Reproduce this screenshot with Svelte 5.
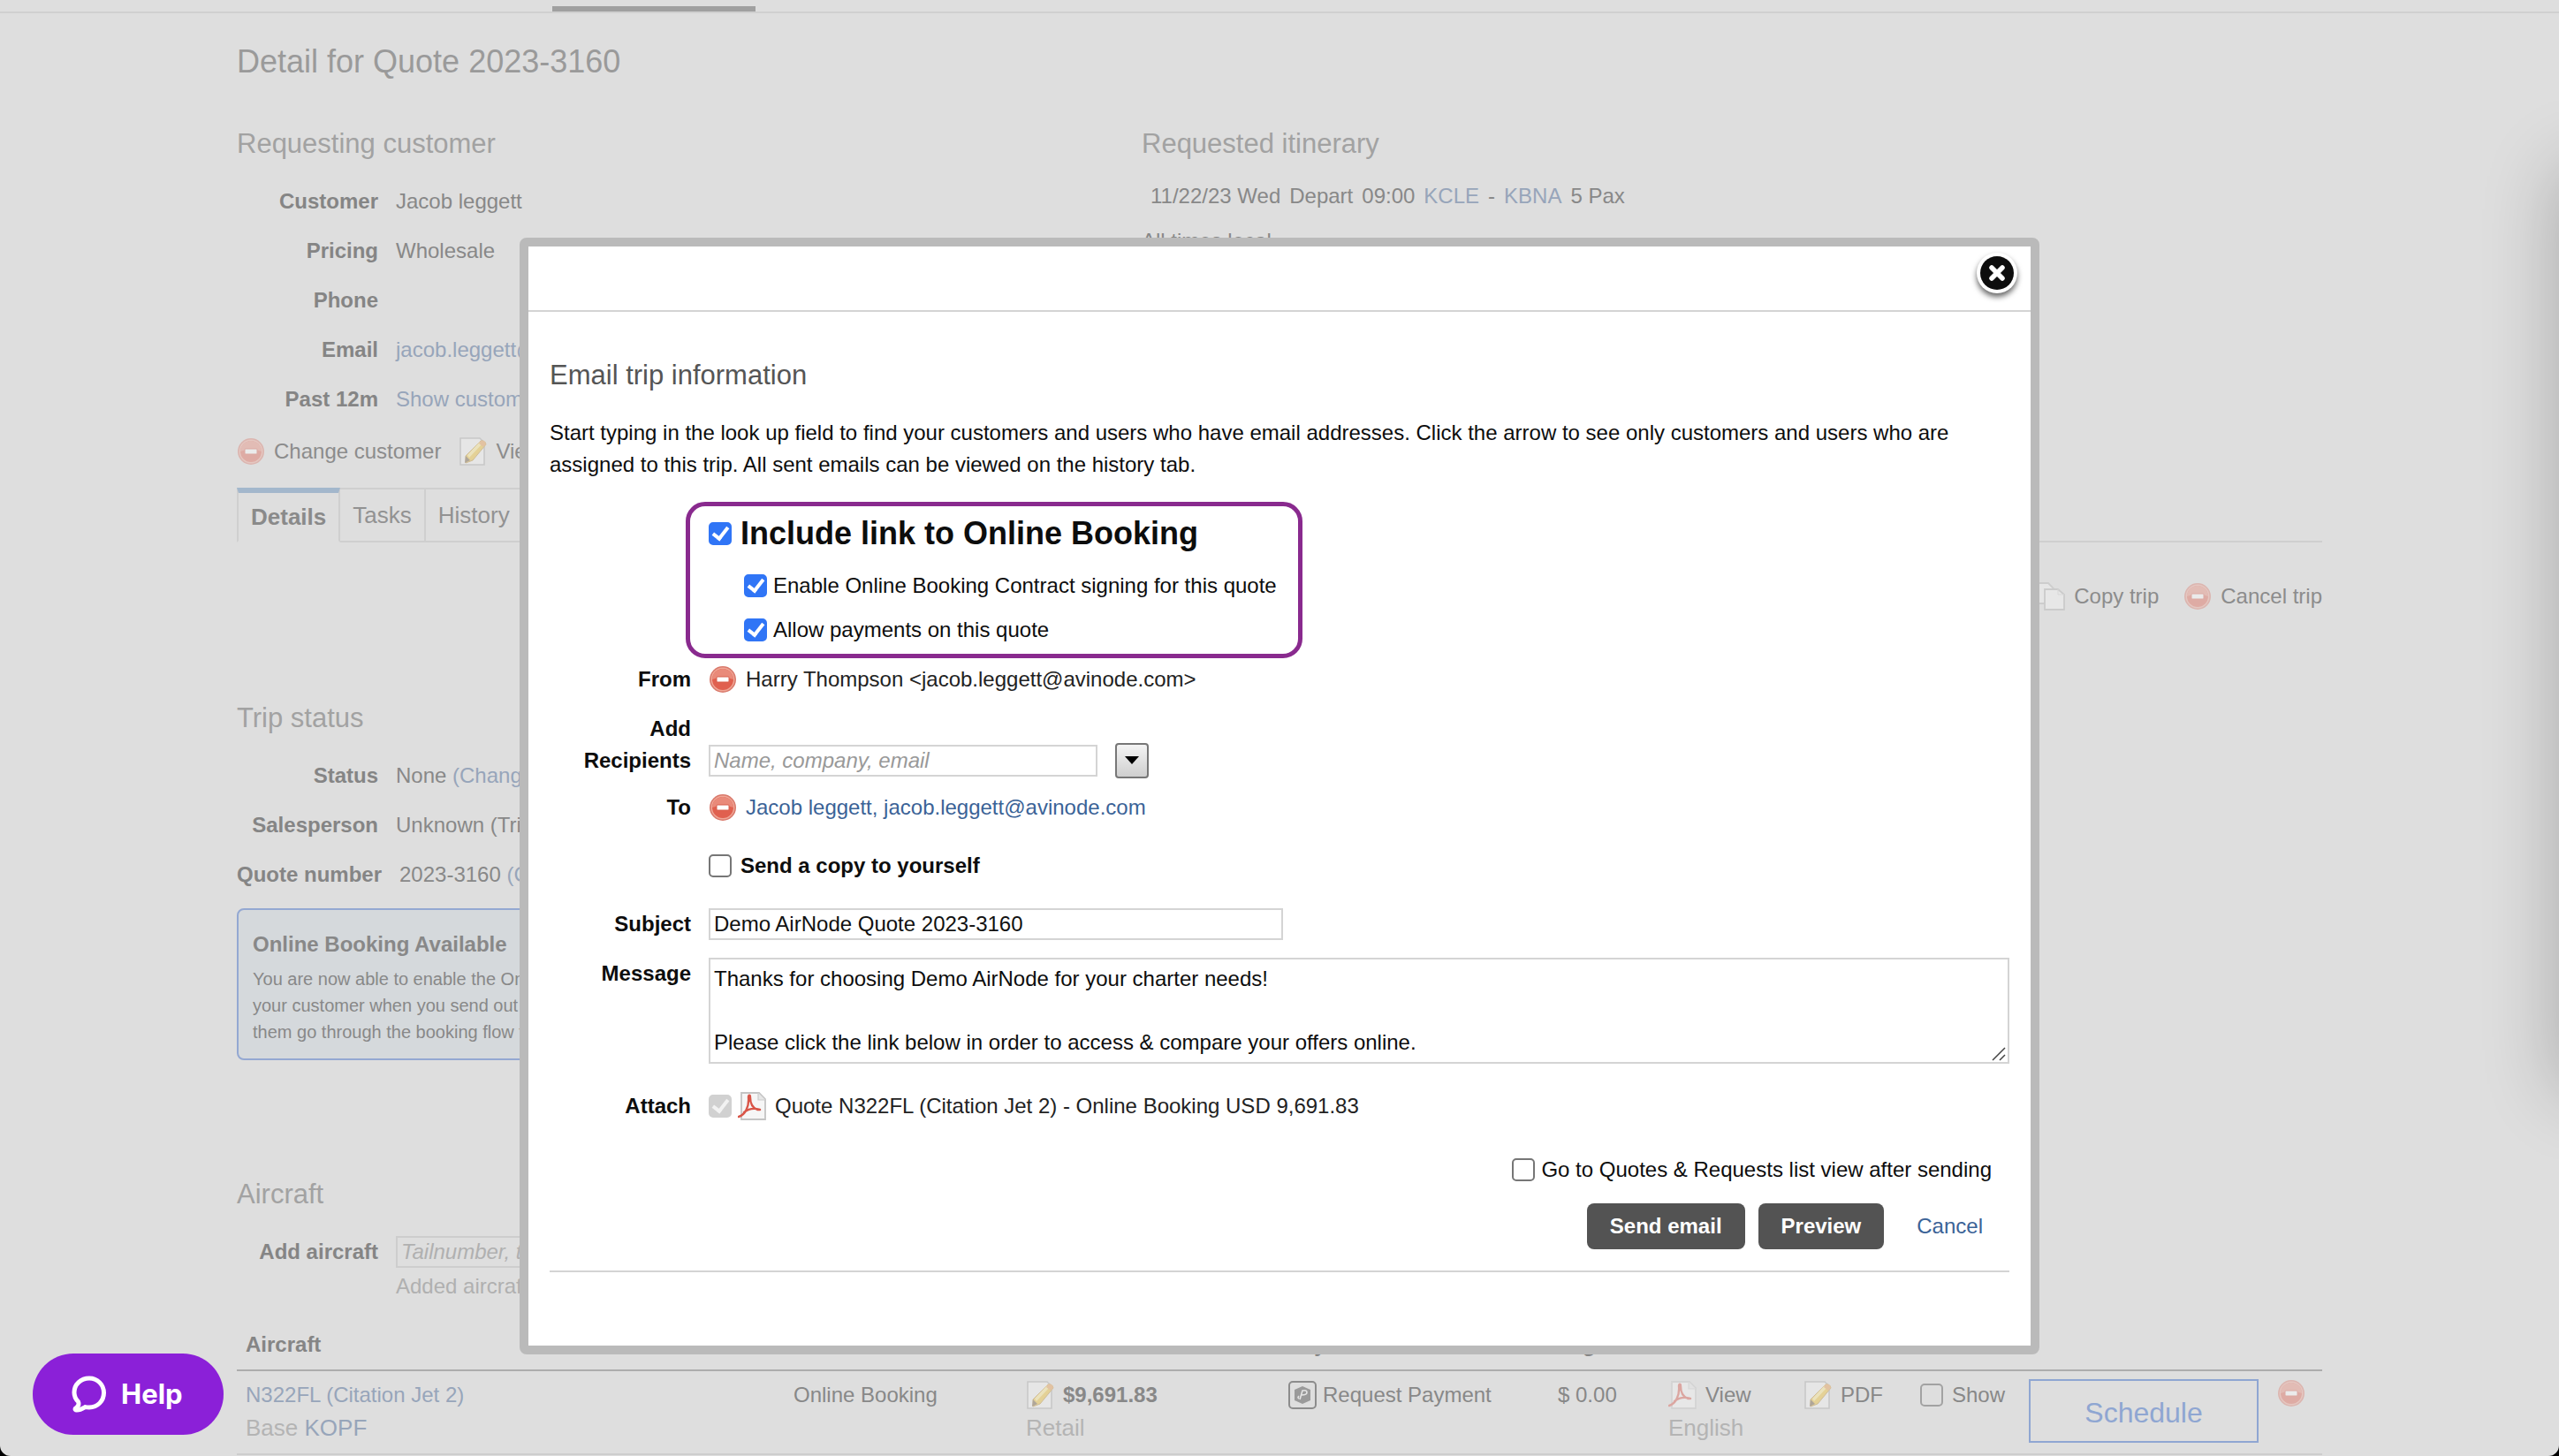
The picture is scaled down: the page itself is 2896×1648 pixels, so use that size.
<script>
  let includeLink = $state(true);
  let contractSigning = $state(true);
  let allowPayments = $state(true);
  let copySelf = $state(false);
  let goToList = $state(false);
  let showQuote = $state(false);
  let recipient = $state('');
  let tailnumber = $state('');
  let subject = $state('Demo AirNode Quote 2023-3160');
  let message = $state(
    'Thanks for choosing Demo AirNode for your charter needs!\n\nPlease click the link below in order to access & compare your offers online.'
  );
  const tabs = ['Details', 'Tasks', 'History', 'Emails'];
</script>

{#snippet minusIcon()}
  <svg class="icon" viewBox="0 0 32 32" aria-hidden="true">
    <circle cx="16" cy="16" r="15" fill="#d9796b" />
    <circle cx="16" cy="16" r="13.4" fill="#f0a797" />
    <circle cx="16" cy="16" r="12" fill="#e0604f" />
    <path d="M4 16a12 12 0 0 1 24 0q-12-5-24 0z" fill="#e98a7a" />
    <rect x="9" y="13" width="14" height="6" rx="1" fill="#fff" stroke="#d8604f" />
  </svg>
{/snippet}

{#snippet noteIcon()}
  <svg class="icon" viewBox="0 0 32 32" aria-hidden="true">
    <path d="M2 1h22l5 5v25H2z" fill="#f4f4f4" stroke="#a8a8a8" stroke-width="1.6" />
    <path d="M25 4q5-1 6 4L16 26l-8 3 0-8z" fill="#edc02c" stroke="#b98a2e" />
    <path d="M10 20 24 5l3 2-15 16z" fill="#ffe98a" />
    <path d="M25 4q5-1 6 4l-3 3-5-4z" fill="#e89a4a" />
    <path d="M8 21l5 5-6 3z" fill="#6b5334" />
  </svg>
{/snippet}

{#snippet pdfIcon()}
  <svg class="icon" viewBox="0 0 32 32" aria-hidden="true">
    <path d="M4 1h20l7 7v23H4z" fill="#f6f6f6" stroke="#c4c4c4" stroke-width="1.8" />
    <path d="M23 1v8h8" fill="#e6e6e6" stroke="#cccccc" stroke-width="1.2" />
    <path
      d="M1 28C8 26 13 17 12 6c0-3 2-3 2 0 0 7 3 12 8 14h3M7 23c5-4 12-5 18-3"
      fill="none"
      stroke="#d95548"
      stroke-width="2.4"
      stroke-linecap="round"
    />
  </svg>
{/snippet}

<div class="screen">
  <div class="page">
    <div class="topbar"><span class="topbar-active"></span></div>

    <main>
      <h1>Detail for Quote 2023-3160</h1>

      <div class="summary">
        <section>
          <h2>Requesting customer</h2>
          <dl>
            <div><dt>Customer</dt><dd>Jacob leggett</dd></div>
            <div><dt>Pricing</dt><dd>Wholesale</dd></div>
            <div><dt>Phone</dt><dd></dd></div>
            <div><dt>Email</dt><dd><a href="#email">jacob.leggett@avinode.com</a></dd></div>
            <div><dt>Past 12m</dt><dd><a href="#stats">Show customer stats</a></dd></div>
          </dl>
          <div class="links">
            <a class="action" href="#change">{@render minusIcon()}Change customer</a>
            <a class="action" href="#view">{@render noteIcon()}View</a>
          </div>
        </section>
        <section>
          <h2>Requested itinerary</h2>
          <div class="itinerary">
            <span>11/22/23 Wed</span><span>Depart</span><span>09:00</span><a href="#kcle">KCLE</a>
            <span>-</span><a href="#kbna">KBNA</a><span>5 Pax</span>
          </div>
          <p class="local">All times local</p>
        </section>
      </div>

      <nav class="tabs">
        {#each tabs as tab, i}
          <a href="#{tab}" class:active={i === 0}>{tab}</a>
        {/each}
      </nav>

      <div class="trip-actions">
        <a class="action" href="#copy">
          <svg class="icon" viewBox="0 0 32 32" aria-hidden="true">
            <path d="M0 1h13l6 6v17H0z" fill="#f2f2f2" stroke="#b5b5b5" stroke-width="1.8" />
            <path d="M9 8h15l7 6v17H9z" fill="#f6f6f6" stroke="#b0b0b0" stroke-width="1.8" />
            <path d="M24 8v6h7" fill="none" stroke="#cfcfcf" />
          </svg>Copy trip
        </a>
        <a class="action" href="#cancel-trip">{@render minusIcon()}Cancel trip</a>
      </div>

      <section class="status">
        <h2>Trip status</h2>
        <dl>
          <div><dt>Status</dt><dd>None <a href="#status">(Change)</a></dd></div>
          <div><dt>Salesperson</dt><dd>Unknown (Trip)</dd></div>
          <div><dt>Quote number</dt><dd>2023-3160 <a href="#number">(Change)</a></dd></div>
        </dl>
        <div class="notice">
          <strong>Online Booking Available</strong>
          <p>
            You are now able to enable the Online<br />
            your customer when you send out the<br />
            them go through the booking flow to
          </p>
        </div>
      </section>

      <section class="aircraft">
        <h2>Aircraft</h2>
        <div class="add-row">
          <label for="tail">Add aircraft</label>
          <input id="tail" type="text" placeholder="Tailnumber, type" bind:value={tailnumber} />
        </div>
        <p class="hint">Added aircraft are listed below</p>

        <table>
          <colgroup>
            <col class="c-aircraft" /><col class="c-source" /><col class="c-price" />
            <col class="c-payment" /><col class="c-amount" /><col class="c-view" />
            <col class="c-pdf" /><col class="c-show" /><col class="c-schedule" /><col class="c-remove" />
          </colgroup>
          <thead>
            <tr>
              <th>Aircraft</th><th></th><th>Price</th><th>Payment</th><th>Flight</th>
              <th></th><th></th><th></th><th></th><th></th>
            </tr>
          </thead>
          <tbody>
            <tr>
              <td>
                <div class="line"><a href="#n322fl">N322FL (Citation Jet 2)</a></div>
                <div class="sub">Base <a href="#kopf">KOPF</a></div>
              </td>
              <td><div class="line">Online Booking</div></td>
              <td>
                <div class="line">{@render noteIcon()}<b>$9,691.83</b></div>
                <div class="sub">Retail</div>
              </td>
              <td>
                <div class="line tight">
                  <svg class="icon strong" viewBox="0 0 32 32" aria-hidden="true">
                    <rect x="1" y="1" width="30" height="30" rx="4" fill="none" stroke="#8c8c8c" stroke-width="2" />
                    <path d="M16 6l9 4v12l-9 4-9-4V10z" fill="#9a9a9a" />
                    <path d="M13 21l3-10q5-1 5 2t-6 3M12 17q-2 2 0 3" fill="none" stroke="#e4e4e4" stroke-width="1.6" />
                  </svg>
                  Request Payment
                </div>
              </td>
              <td><div class="line">$ 0.00</div></td>
              <td>
                <div class="line">{@render pdfIcon()}View</div>
                <div class="sub">English</div>
              </td>
              <td><div class="line">{@render noteIcon()}PDF</div></td>
              <td>
                <label class="line"><input type="checkbox" bind:checked={showQuote} />Show</label>
              </td>
              <td><button class="schedule" type="button">Schedule</button></td>
              <td>
                <button class="remove" type="button" aria-label="Remove aircraft">{@render minusIcon()}</button>
              </td>
            </tr>
          </tbody>
        </table>
      </section>
    </main>
  </div>

  <div class="side-shadow"></div>

  <div class="overlay">
    <div class="dialog" role="dialog" aria-labelledby="dialog-title">
      <header>
        <button class="close" type="button" aria-label="Close">
          <svg viewBox="0 0 64 64" aria-hidden="true">
            <circle class="rim" cx="32" cy="30" r="23" fill="#fff" />
            <circle cx="32" cy="30" r="19" fill="#0d0d0d" />
            <path d="M26 24l12 12m0-12l-12 12" stroke="#fff" stroke-width="5.500" stroke-linecap="round" />
          </svg>
        </button>
      </header>

      <form onsubmit={(e) => e.preventDefault()}>
        <h2 id="dialog-title">Email trip information</h2>
        <p>
          Start typing in the look up field to find your customers and users who have email addresses. Click the
          arrow to see only customers and users who are assigned to this trip. All sent emails can be viewed on
          the history tab.
        </p>

        <div class="booking">
          <label class="check lead"><input type="checkbox" bind:checked={includeLink} />Include link to Online Booking</label>
          <label class="check nested"><input type="checkbox" bind:checked={contractSigning} />Enable Online Booking Contract signing for this quote</label>
          <label class="check nested last"><input type="checkbox" bind:checked={allowPayments} />Allow payments on this quote</label>
        </div>

        <div class="field from">
          <span class="name">From</span>
          <div class="value">
            <button class="remove" type="button" aria-label="Remove sender">{@render minusIcon()}</button>
            Harry Thompson &lt;jacob.leggett@avinode.com&gt;
          </div>
        </div>
        <div class="field recipients">
          <label class="name" for="recipient">Add<br />Recipients</label>
          <div class="value">
            <input id="recipient" type="text" placeholder="Name, company, email" bind:value={recipient} />
            <button class="arrow" type="button" aria-label="Show assigned customers">
              <svg viewBox="0 0 16 10" aria-hidden="true"><path d="M0 0h16L8 9z" /></svg>
            </button>
          </div>
        </div>
        <div class="field to">
          <span class="name">To</span>
          <div class="value">
            <button class="remove" type="button" aria-label="Remove recipient">{@render minusIcon()}</button>
            <a href="#recipient">Jacob leggett, jacob.leggett@avinode.com</a>
          </div>
        </div>
        <div class="field spaced">
          <span class="name"></span>
          <label class="check bold"><input type="checkbox" bind:checked={copySelf} />Send a copy to yourself</label>
        </div>
        <div class="field spaced">
          <label class="name" for="subject">Subject</label>
          <input id="subject" type="text" bind:value={subject} />
        </div>
        <div class="field">
          <label class="name" for="message">Message</label>
          <div class="message">
            <textarea id="message" rows="3" bind:value={message}></textarea>
            <svg class="grip" viewBox="0 0 16 16" aria-hidden="true">
              <path d="M1 15L15 1M9 15l6-6" stroke="#444" stroke-width="1.500" />
            </svg>
          </div>
        </div>
        <div class="field spaced">
          <span class="name">Attach</span>
          <label class="value attach">
            <input type="checkbox" checked disabled />
            {@render pdfIcon()}
            <span>Quote N322FL (Citation Jet 2) - Online Booking USD 9,691.83</span>
          </label>
        </div>

        <label class="check after"><input type="checkbox" bind:checked={goToList} />Go to Quotes &amp; Requests list view after sending</label>
        <div class="buttons">
          <button type="submit">Send email</button>
          <button type="button">Preview</button>
          <a href="#cancel">Cancel</a>
        </div>
      </form>
    </div>
  </div>

  <button class="help" type="button">
    <svg viewBox="0 0 40 42" aria-hidden="true">
      <path
        d="M20 3C10.500 3 3 10 3 19c0 4.500 2 8 4.500 10.500 1.500 3 0 5.500-3 7.500-1 1.500 0 2.200 1.500 2 4 0 7-2 9.500-3.500C17 36 18.500 36 20 36c9.500 0 16.500-7.500 16.500-16.500S29.500 3 20 3z"
        fill="none"
        stroke="#fff"
        stroke-width="5"
        stroke-linejoin="round"
      />
    </svg>
    Help
  </button>
</div>

<style>
  :global(body) {
    margin: 0;
    background: #000;
  }
  .screen {
    position: relative;
    height: 100vh;
    overflow: hidden;
    border-radius: 0 0 12px 12px;
    background: #dedede;
    color: #888;
    font: 24px/36px 'Liberation Sans', Arial, sans-serif;
  }
  .screen :is(h1, h2, p, dl, dd) {
    margin: 0;
  }
  a {
    color: #97a5ba;
    text-decoration: none;
  }
  button,
  input,
  textarea {
    box-sizing: border-box;
    margin: 0;
    font: inherit;
  }
  button {
    padding: 0;
    border: 0;
    background: none;
    cursor: pointer;
  }
  .icon {
    display: block;
    flex: none;
    width: 32px;
    height: 32px;
  }
  .page .icon {
    opacity: 0.4;
  }
  .page .icon.strong {
    opacity: 1;
  }

  /* page behind the dialog */
  .topbar {
    height: 13px;
    border-bottom: 2px solid #d0d0d0;
  }
  .topbar-active {
    display: block;
    width: 230px;
    height: 6px;
    margin-left: 625px;
    border-top: 7px solid transparent;
    background: #a0a0a0;
    background-clip: padding-box;
  }
  main {
    max-width: 2360px;
    margin: 0 auto;
    padding-top: 33px;
  }
  h1 {
    color: #9a9a9a;
    font-size: 36px;
    font-weight: 400;
    line-height: 44px;
  }
  h2 {
    color: #a2a2a2;
    font-size: 31px;
    font-weight: 400;
    line-height: 36px;
  }
  .summary {
    display: grid;
    grid-template-columns: 1024fr 1336fr;
    margin-top: 53px;
  }
  dl {
    display: flex;
    flex-direction: column;
    gap: 20px;
    padding-top: 29px;
  }
  dl > div {
    display: flex;
    gap: 20px;
    min-height: 36px;
    white-space: nowrap;
  }
  dt {
    min-width: 160px;
    color: #858585;
    font-weight: 700;
    text-align: right;
  }
  .links,
  .trip-actions,
  .action,
  .line {
    display: flex;
    align-items: center;
  }
  .links {
    gap: 20px;
    margin-top: 23px;
  }
  .action {
    gap: 10px;
    color: #8c8c8c;
  }
  .itinerary {
    display: flex;
    gap: 10px;
    padding: 23px 0 0 10px;
  }
  .screen .local {
    margin-top: 15px;
  }
  .tabs {
    display: flex;
    height: 60px;
    margin-top: 23px;
    border-bottom: 2px solid #cfcfcf;
    font-size: 26px;
  }
  .tabs a {
    height: 47px;
    padding: 11px 14px 0;
    border-top: 2px solid #cfcfcf;
    border-right: 2px solid #cfcfcf;
    color: #929292;
  }
  .tabs .active {
    height: 45px;
    padding-top: 9px;
    border-top: 6px solid #a3b7cc;
    border-left: 2px solid #cfcfcf;
    border-bottom: 2px solid #dedede;
    color: #8a8a8a;
    font-weight: 700;
  }
  .trip-actions {
    justify-content: flex-end;
    gap: 28px;
    margin-top: 43px;
  }
  .status {
    margin-top: 102px;
  }
  .notice {
    width: 600px;
    margin-top: 20px;
    padding: 21px 16px 15px;
    border: 2px solid #94a8d2;
    border-radius: 8px;
    background: #d5d9dc;
  }
  .screen .notice p {
    margin-top: 6px;
    font-size: 20px;
    line-height: 30px;
  }
  .aircraft {
    margin-top: 134px;
  }
  .add-row {
    display: flex;
    gap: 20px;
    margin-top: 29px;
  }
  .add-row label {
    width: 160px;
    color: #858585;
    font-weight: 700;
    text-align: right;
  }
  input[type='text'] {
    height: 36px;
    padding: 0 4px;
    border: 2px solid #d4d4d4;
    background: #fff;
    color: #111;
  }
  .add-row input[type='text'] {
    width: 440px;
    border-color: #cdcdcd;
    background: transparent;
  }
  input::placeholder {
    color: #999;
    font-style: italic;
    opacity: 1;
  }
  .add-row input::placeholder,
  .hint {
    color: #b0b0b0;
  }
  .screen .hint {
    margin: 3px 0 0 180px;
  }
  table {
    width: 100%;
    margin-top: 30px;
    border-collapse: collapse;
    table-layout: fixed;
  }
  .c-aircraft { width: 620px; }
  .c-source { width: 263px; }
  .c-price { width: 297px; }
  .c-payment { width: 305px; }
  .c-amount { width: 125px; }
  .c-view { width: 153px; }
  .c-pdf { width: 132px; }
  .c-show { width: 123px; }
  .c-schedule { width: 281px; }
  .c-remove { width: 61px; }
  th {
    padding: 0 10px 10px;
    border-bottom: 2px solid #adadad;
    color: #858585;
    text-align: left;
  }
  td {
    padding: 9px 0 10px 10px;
    border-bottom: 2px solid #cdcdcd;
    vertical-align: top;
    white-space: nowrap;
  }
  .line {
    gap: 10px;
    height: 36px;
  }
  .line.tight {
    gap: 7px;
  }
  .sub {
    color: #b4b4b4;
    font-size: 26px;
    line-height: 38px;
  }
  .schedule {
    display: block;
    width: 260px;
    height: 72px;
    padding-top: 4px;
    border: 2px solid #8fa6d2;
    color: #8fa6d2;
    font-size: 32px;
  }
  .side-shadow {
    position: absolute;
    top: 190px;
    left: 100%;
    width: 400px;
    height: 1046px;
    box-shadow: 0 0 80px rgba(0, 0, 0, 0.24);
  }

  /* dialog */
  .overlay {
    position: absolute;
    inset: 0;
    padding-top: 269px;
  }
  .dialog {
    box-sizing: border-box;
    max-width: 1720px;
    margin: 0 auto;
    border: 10px solid #bababa;
    border-radius: 8px;
    background: #fff;
    color: #222;
  }
  .dialog header {
    display: flex;
    align-items: flex-start;
    justify-content: flex-end;
    height: 72px;
    padding-right: 6px;
    border-bottom: 2px solid #d4d4d4;
  }
  .close svg {
    display: block;
    width: 64px;
    height: 64px;
  }
  .rim {
    filter: drop-shadow(0 4px 3px rgba(0, 0, 0, 0.6));
  }
  form {
    margin: 0 24px;
    padding: 54px 0 83px;
  }
  form h2 {
    color: #555;
  }
  form p {
    padding-top: 29px;
    color: #0d0d0d;
  }
  form a {
    color: #3b6397;
  }
  .booking {
    width: fit-content;
    margin: 24px 0 0 154px;
    padding: 9px 24px 9px 21px;
    border: 5px solid #892a8e;
    border-radius: 22px;
  }
  .check {
    display: flex;
    align-items: center;
    gap: 7px;
    color: #0d0d0d;
  }
  .check.lead {
    gap: 10px;
    font-size: 36px;
    font-weight: 700;
    line-height: 44px;
  }
  .check.nested {
    margin: 19px 0 0 40px;
  }
  .check.nested.last {
    margin-top: 14px;
  }
  .check.bold {
    gap: 10px;
    font-weight: 700;
  }
  input[type='checkbox'] {
    display: grid;
    place-items: center;
    flex: none;
    width: 26px;
    height: 26px;
    border: 2px solid #767676;
    border-radius: 5px;
    background: #fff;
    appearance: none;
  }
  .page input[type='checkbox'] {
    border-color: #a2a2a2;
    background: transparent;
  }
  input[type='checkbox']:checked {
    border-color: #3075f6;
    background: #3075f6;
  }
  input[type='checkbox']:checked::after {
    width: 7px;
    height: 14px;
    margin-bottom: 4px;
    border: solid #fff;
    border-width: 0 4px 4px 0;
    transform: rotate(38deg);
    content: '';
  }
  input[type='checkbox']:disabled {
    border-color: #d1d1d1;
    background: #d1d1d1;
  }
  input[type='checkbox']:disabled::after {
    border-color: #f2f2f2;
  }
  .field {
    display: grid;
    grid-template-columns: 160px 1fr;
    column-gap: 20px;
    margin-top: 20px;
  }
  .field.from {
    margin-top: 6px;
  }
  .field.to {
    margin-top: 15px;
  }
  .field.spaced {
    margin-top: 30px;
  }
  .name {
    color: #0d0d0d;
    font-weight: 700;
    text-align: right;
  }
  .value {
    display: flex;
    align-items: center;
    gap: 10px;
  }
  .recipients .value {
    gap: 20px;
    padding-top: 34px;
  }
  #recipient {
    width: 440px;
  }
  .arrow {
    display: grid;
    place-items: center;
    box-sizing: border-box;
    width: 38px;
    height: 40px;
    border: 2px solid #777;
    border-radius: 4px;
    background: linear-gradient(#f4f4f4, #cfcfcf);
  }
  .arrow svg {
    width: 16px;
    height: 10px;
  }
  #subject {
    width: 650px;
  }
  .message {
    position: relative;
  }
  textarea {
    display: block;
    width: 100%;
    height: 120px;
    padding: 4px;
    border: 2px solid #d4d4d4;
    color: #0d0d0d;
    overflow: hidden;
    resize: none;
  }
  .grip {
    position: absolute;
    right: 4px;
    bottom: 3px;
    width: 16px;
    height: 16px;
    pointer-events: none;
  }
  .attach input {
    margin-right: -3px;
  }
  .check.after {
    justify-content: flex-end;
    margin-top: 36px;
    padding-right: 20px;
  }
  .buttons {
    display: flex;
    align-items: center;
    justify-content: flex-end;
    gap: 15px;
    margin-top: 20px;
    padding: 0 30px 24px 0;
    border-bottom: 2px solid #d4d4d4;
  }
  .buttons button {
    height: 52px;
    padding: 0 26px;
    border-radius: 8px;
    background: #535353;
    color: #fff;
    font-weight: 700;
  }
  .buttons a {
    margin-left: 22px;
  }

  .help {
    position: absolute;
    bottom: 24px;
    left: 37px;
    display: flex;
    align-items: center;
    gap: 16px;
    height: 92px;
    padding: 0 46px 0 44px;
    border-radius: 46px;
    background: #8b20d8;
    color: #fff;
    font: 700 31px/36px Inter, sans-serif;
  }
  .help svg {
    width: 40px;
    height: 42px;
  }
</style>
